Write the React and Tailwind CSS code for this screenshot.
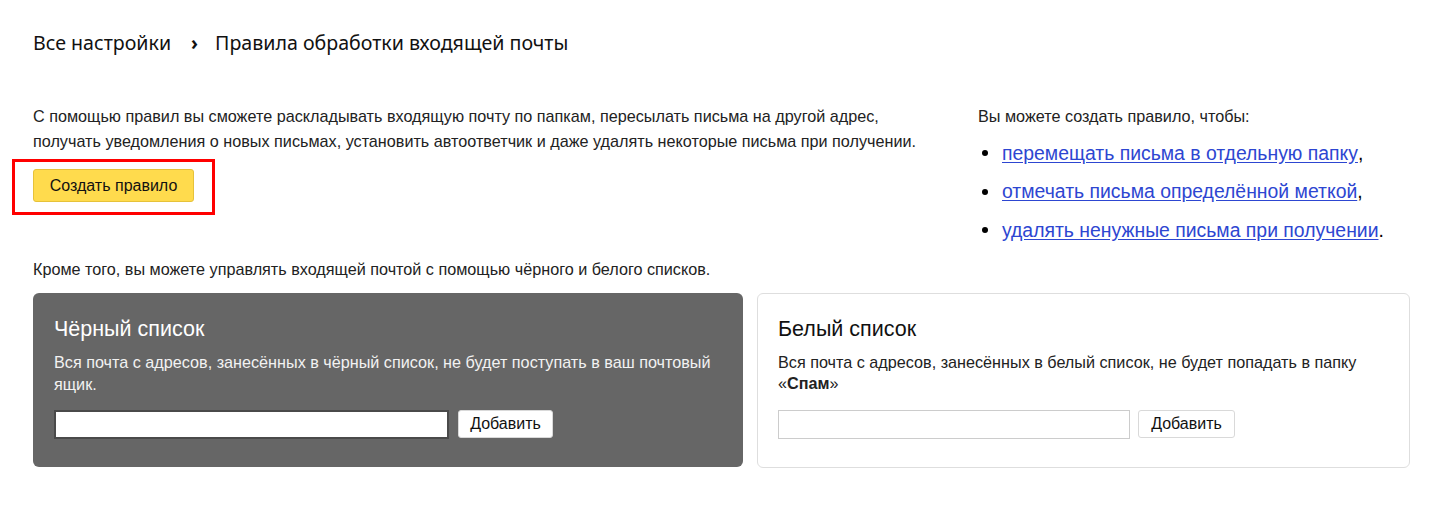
import React from "react";

const arial = { fontFamily: '"Liberation Sans", Arial, sans-serif' };

export default function App() {
  return (
    <div className="w-[1433px] h-[523px] bg-white text-[#000] pl-[33px] pr-[23px] pt-[30px]" style={arial}>
      <div className="flex items-center h-[26px] text-[19.6px] text-[#111]" style={{ fontFamily: '"Noto Sans", "Open Sans", sans-serif' }}>
        <span>Все настройки</span>
        <span className="ml-[20px] mr-[17px] text-[19px] font-bold">›</span>
        <span>Правила обработки входящей почты</span>
      </div>

      <div className="flex mt-[48px]">
        <div className="w-[945px]">
          <p className="text-[16.2px] leading-[25px] text-[#222]">
            С помощью правил вы сможете раскладывать входящую почту по папкам, пересылать письма на другой адрес,
            <br />
            получать уведомления о новых письмах, установить автоответчик и даже удалять некоторые письма при получении.
          </p>
          <div className="relative mt-[15px] w-[161px] h-[33px]">
            <button className="w-[161px] h-[33px] rounded-[3px] bg-[#ffdb4d] border border-[#e6c23a] text-[16px] text-[#111]">
              Создать правило
            </button>
            <div className="absolute left-[-21px] top-[-10px] w-[203px] h-[56px] border-[3px] border-[#ff0000] pointer-events-none" />
          </div>
        </div>
        <div className="flex-1">
          <p className="text-[16.2px] leading-[25px] text-[#222]">Вы можете создать правило, чтобы:</p>
          <ul className="mt-[5px]">
            {[
              ["перемещать письма в отдельную папку", ","],
              ["отмечать письма определённой меткой", ","],
              ["удалять ненужные письма при получении", "."],
            ].map(([t, p]) => (
              <li key={t} className="flex items-center h-[38.5px] text-[19.4px]">
                <span className="w-[6px] h-[6px] rounded-full bg-black ml-[4px] mr-[14px]" />
                <a href="#" className="text-[#2d46d1] underline underline-offset-[2px]">{t}</a>
                <span>{p}</span>
              </li>
            ))}
          </ul>
        </div>
      </div>

      <p className="mt-[7px] text-[16.2px] leading-[25px] text-[#222]">
        Кроме того, вы можете управлять входящей почтой с помощью чёрного и белого списков.
      </p>

      <div className="flex gap-[14px] mt-[11px]">
        <div className="w-[710px] h-[174px] rounded-[6px] bg-[#666666] px-[21px] pt-[23px]">
          <div className="text-[21.5px] leading-[26px] text-white">Чёрный список</div>
          <p className="mt-[9px] text-[16.2px] leading-[22px] text-[#f2f2f2]">
            Вся почта с адресов, занесённых в чёрный список, не будет поступать в ваш почтовый ящик.
          </p>
          <div className="flex items-center gap-[9px] mt-[15px]">
            <input className="w-[395px] h-[29px] bg-white border-2 border-[#4a4a4a] outline-none" />
            <button className="w-[95px] h-[28px] rounded-[3px] bg-white border border-[#d9d9d9] text-[16px] text-[#111]">
              Добавить
            </button>
          </div>
        </div>
        <div className="flex-1 h-[175px] rounded-[6px] bg-white border border-[#dedede] px-[20px] pt-[22px]">
          <div className="text-[21.5px] leading-[26px] text-[#111]">Белый список</div>
          <p className="mt-[10px] text-[16.2px] leading-[21px] text-[#222]">
            Вся почта с адресов, занесённых в белый список, не будет попадать в папку
            <br />
            «<b>Спам</b>»
          </p>
          <div className="flex items-center gap-[8px] mt-[16px]">
            <input className="w-[352px] h-[29px] bg-white border border-[#cccccc] outline-none" />
            <button className="w-[97px] h-[28px] rounded-[3px] bg-white border border-[#d9d9d9] text-[16px] text-[#111]">
              Добавить
            </button>
          </div>
        </div>
      </div>
    </div>
  );
}
